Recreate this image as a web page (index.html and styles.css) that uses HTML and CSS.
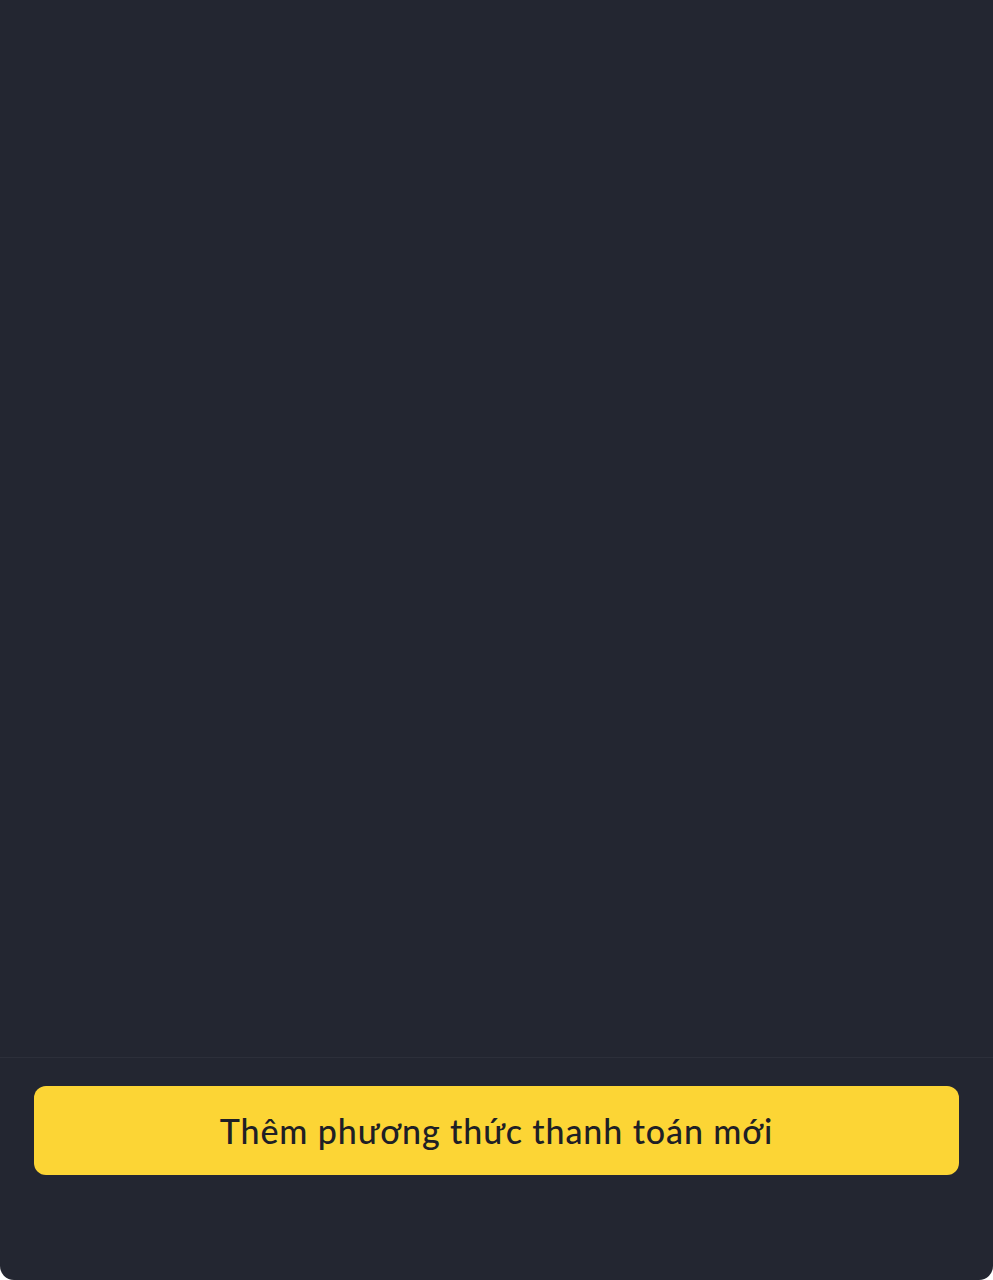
FILE: index.html
```html
<!DOCTYPE html>
<html lang="vi">
<head>
    <meta charset="UTF-8">
    <meta name="viewport" content="width=device-width, initial-scale=1.0">
    <title>Phương thức thanh toán</title>
    <link rel="stylesheet" href="styles.css">
</head>
<body>
    <div class="sheet">
        <div class="content">
            <!-- danh sách phương thức thanh toán (trống) -->
        </div>
        <div class="footer">
            <button class="add-btn">Thêm phương thức thanh toán mới</button>
        </div>
    </div>
</body>
</html>
```

FILE: styles.css
```css
body {
    margin: 0;
    padding: 0;
    background-color: #fff;
    font-family: Lato, "Open Sans", Arial, sans-serif;
}
.sheet {
    height: 1280px;
    display: flex;
    flex-direction: column;
    background-color: #232631;
    border-radius: 0 0 14px 14px;
    overflow: hidden;
}
.content {
    flex: 1;
}
.footer {
    border-top: 1px solid #2c2f3a;
    padding: 28px 34px 105px 34px;
}
.add-btn {
    display: block;
    width: 100%;
    height: 89px;
    padding: 0;
    border: none;
    border-radius: 12px;
    background-color: #fcd535;
    color: #1e2026;
    font-family: Lato, "Open Sans", Arial, sans-serif;
    font-size: 34px;
    font-weight: 500;
    letter-spacing: 0.9px;
    cursor: pointer;
}
```
